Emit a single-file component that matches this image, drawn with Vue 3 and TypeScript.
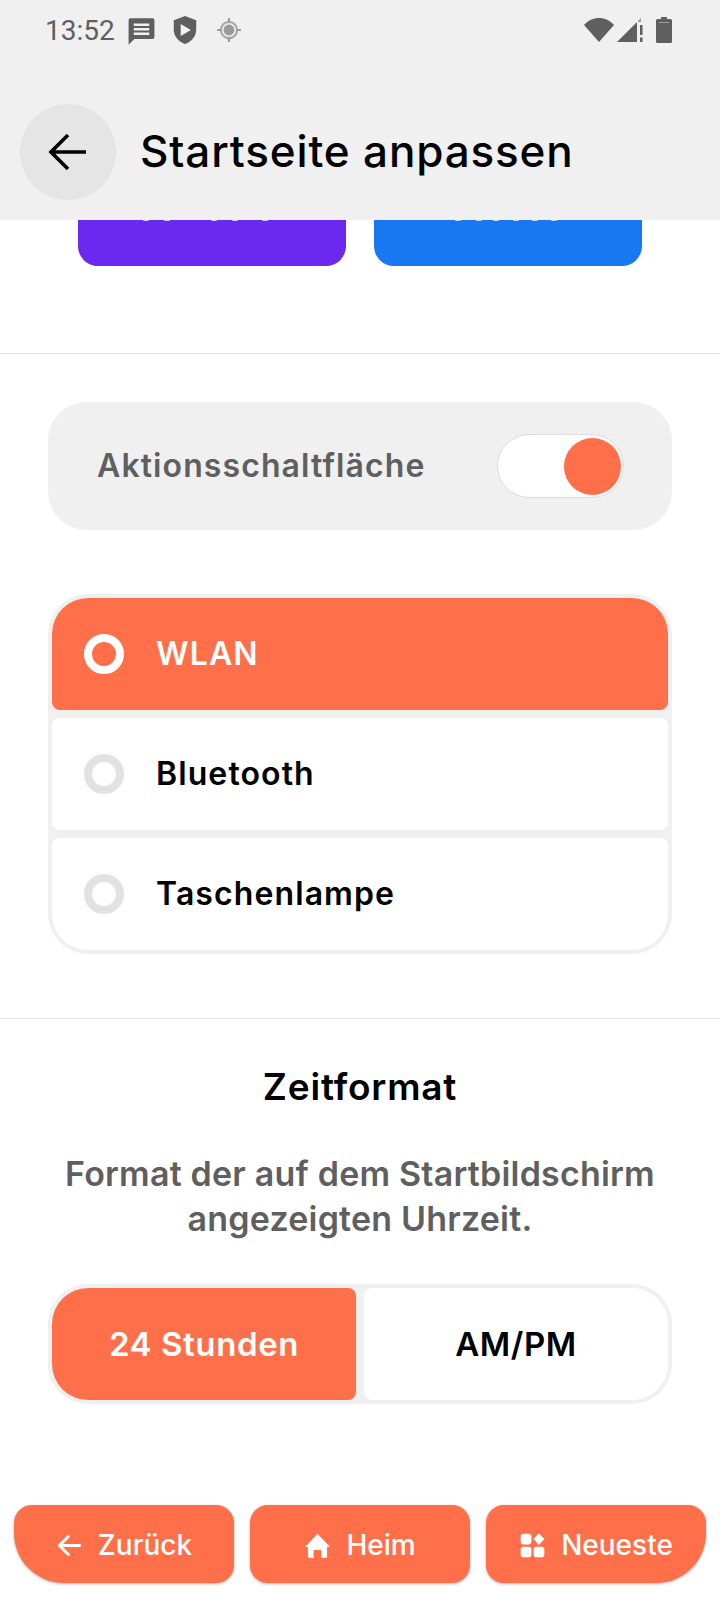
<script setup lang="ts">
const radios = [
  { label: 'WLAN', on: true },
  { label: 'Bluetooth', on: false },
  { label: 'Taschenlampe', on: false },
]
const purpleDots = [65, 86, 133, 154, 184]
const blueDots = [81, 102, 119, 139, 158, 177]
</script>

<template>
  <div class="page">
    <header class="head">
      <div class="status">
        <span class="time">13:52</span>
        <svg class="si" viewBox="0 0 24 24" width="31" height="31"><path fill="#5f5f5f" d="M3.5 2.5h17a1.5 1.5 0 0 1 1.5 1.5v13a1.500 1.500 0 0 1-1.500 1.500H6.500L2 23V4a1.500 1.500 0 0 1 1.500-1.500z"/><path fill="#f0f0f0" d="M6 6.500h12v2H6zM6 10h12v2H6zM6 13.500h12v2H6z"/></svg>
        <svg class="si gap" viewBox="0 0 24 28" width="26" height="30"><path fill="#5f5f5f" d="M12 1l10.500 4v8.500c0 6.500-4.500 11.500-10.500 13.500C6 25 1.500 20 1.500 13.500V5z"/><path fill="#f0f0f0" d="M8 8.500l9.500 5.500L8 19.500z"/></svg>
        <svg class="si loc" viewBox="0 0 24 24" width="26" height="26"><circle cx="12" cy="12" r="5" fill="#9a9a9a"/><circle cx="12" cy="12" r="7.500" fill="none" stroke="#a8a8a8" stroke-width="2"/><path stroke="#9a9a9a" stroke-width="2" d="M12 1v4M12 19v4M1 12h4M19 12h4"/></svg>
        <span class="spacer"></span>
        <svg viewBox="0 0 30 26" width="30" height="26"><path fill="#5f5f5f" d="M0 8C8-1.500 22-1.500 30 8L15 25z"/></svg>
        <svg class="sig" viewBox="0 0 26 26" width="26" height="26"><path fill="#5f5f5f" d="M0 25L20 5v20z"/><path fill="#9a9a9a" d="M21 4l3-3v4h-3z"/><path fill="#5f5f5f" d="M23 8h2.500v10H23zM23 20.500h2.500V25H23z"/></svg>
        <svg class="bat" viewBox="0 0 16 26" width="16" height="26"><path fill="#5f5f5f" d="M5 0h6v2h3.500A1.500 1.500 0 0 1 16 3.500v21a1.500 1.500 0 0 1-1.500 1.500h-13A1.500 1.500 0 0 1 0 24.500v-21A1.500 1.500 0 0 1 1.500 2H5z"/><path fill="#9a9a9a" d="M3 5h10v1H3z"/></svg>
      </div>
      <div class="bar">
        <button class="back" aria-label="Zurück">
          <svg viewBox="0 0 40 40" width="40" height="40"><path fill="none" stroke="#000" stroke-width="3.600" d="M38 20H4M20 3L3 20l17 17"/></svg>
        </button>
        <h1>Startseite anpassen</h1>
      </div>
    </header>

    <main class="scroll">
      <div class="inner">
        <div class="tiles">
          <div class="tile purple"><i v-for="d in purpleDots" :key="d" :style="{ left: d + 'px' }"></i></div>
          <div class="tile blue"><i v-for="d in blueDots" :key="d" :style="{ left: d + 'px' }"></i></div>
        </div>
        <hr class="rule first" />
        <div class="switchcard">
          <span>Aktionsschaltfläche</span>
          <div class="switch"><i></i></div>
        </div>
        <div class="radios">
          <div v-for="r in radios" :key="r.label" class="radio" :class="{ on: r.on }">
            <span class="dot"></span>
            <span class="rl">{{ r.label }}</span>
          </div>
        </div>
        <hr class="rule second" />
        <h2>Zeitformat</h2>
        <p>Format der auf dem Startbildschirm angezeigten Uhrzeit.</p>
        <div class="seg">
          <div class="opt on">24 Stunden</div>
          <div class="opt">AM/PM</div>
        </div>
      </div>
    </main>

    <nav class="nav">
      <button class="nb l">
        <svg viewBox="0 0 24 24" width="27" height="27"><path fill="none" stroke="#fff" stroke-width="2.600" stroke-linecap="round" stroke-linejoin="round" d="M21 12H3.500M11 4l-8 8 8 8"/></svg>
        Zurück
      </button>
      <button class="nb">
        <svg viewBox="0 0 24 24" width="27" height="27"><path fill="#fff" d="M12 1.500l11 11.500h-2.500v8.500a1.500 1.500 0 0 1-1.500 1.500h-3.500v-6a1 1 0 0 0-1-1h-5a1 1 0 0 0-1 1v6H5a1.500 1.500 0 0 1-1.500-1.500V13H1z"/></svg>
        Heim
      </button>
      <button class="nb r">
        <svg viewBox="0 0 24 24" width="27" height="27"><rect x="1.500" y="1.500" width="9.500" height="9.500" rx="2.500" fill="#fff"/><rect x="1.500" y="13" width="9.500" height="9.500" rx="2.500" fill="#fff"/><rect x="13" y="13" width="9.500" height="9.500" rx="2.500" fill="#fff"/><path fill="#fff" d="M17.700 1l4.800 5.200-4.800 5.300-4.800-5.300z"/></svg>
        Neueste
      </button>
    </nav>
  </div>
</template>

<style>
html, body { margin: 0; background: #fff; }
</style>

<style scoped>
.page { width: 720px; height: 1600px; display: flex; flex-direction: column; background: #fff; font-family: Inter, sans-serif; overflow: hidden; }
.head { height: 220px; background: #f0f0f0; flex: none; position: relative; z-index: 1; }
.status { height: 60px; display: flex; align-items: center; padding: 0 48px 0 45px; color: #5f5f5f; }
.time { font: 400 28px Roboto, sans-serif; margin-right: 11px; }
.gap { margin-left: 15px; }
.loc { margin-left: 18px; }
.spacer { flex: 1; }
.sig { margin-left: 3px; }
.bat { margin-left: 13px; }
.bar { display: flex; align-items: center; height: 96px; margin-top: 44px; padding-left: 20px; }
.back { width: 96px; height: 96px; border: 0; border-radius: 50%; background: #e5e5e5; display: flex; align-items: center; justify-content: center; padding: 0; }
.bar h1 { margin: -2px 0 0 24px; font-size: 44px; font-weight: 500; color: #000; letter-spacing: .85px; }
.scroll { flex: 1; min-height: 0; overflow: hidden; }
.inner { padding: 0 48px; margin-top: -60px; }
.tiles { display: flex; gap: 28px; padding: 0 30px; }
.tile { flex: 1; height: 105.500px; border-radius: 0 0 20px 20px; position: relative; }
.tile i { position: absolute; top: 60px; width: 6px; height: 1px; border-radius: 0 0 3px 3px; background: rgba(255,255,255,.7); }
.purple { background: #6a28f0; }
.blue { background: #1778f2; }
.rule { border: 0; height: 1px; background: #e6e6e6; margin: 0 -48px; }
.rule.first { margin-top: 87.500px; }
.switchcard { margin-top: 48px; height: 128px; border-radius: 38px; background: #f0f0f0; display: flex; align-items: center; justify-content: space-between; padding: 0 48px 0 49px; color: #5f5f5f; font-size: 32px; font-weight: 600; letter-spacing: 1.100px; }
.switchcard span { margin-top: -2px; }
.switch { width: 127px; height: 64px; border-radius: 32px; background: #fff; border: 1px solid #dcdcdc; box-sizing: border-box; display: flex; justify-content: flex-end; align-items: center; padding-right: 2px; }
.switch i { width: 57px; height: 57px; border-radius: 50%; background: #ff704a; }
.radios { margin-top: 64px; background: #f0f0f0; border-radius: 40px; padding: 4px; display: flex; flex-direction: column; gap: 8px; }
.radio { height: 112px; background: #fff; border-radius: 8px; display: flex; align-items: center; padding-left: 32px; gap: 32px; font-size: 32px; font-weight: 600; letter-spacing: 1.100px; color: #000; }
.rl { margin-top: -2px; }
.radio:first-child { border-radius: 36px 36px 8px 8px; }
.radio:last-child { border-radius: 8px 8px 36px 36px; }
.radio.on { background: #ff704a; color: #fff; }
.dot { width: 40px; height: 40px; box-sizing: border-box; border-radius: 50%; border: 8px solid #e2e2e2; }
.on .dot { border-color: #fff; }
.rule.second { margin-top: 64px; }
h2 { margin: 45px 0 0; text-align: center; font-size: 37px; font-weight: 600; letter-spacing: .8px; color: #000; }
p { margin: 41.500px 0 0; text-align: center; font-size: 34px; line-height: 45px; font-weight: 600; letter-spacing: .2px; color: #5f5f5f; }
.seg { margin-top: 43px; height: 120px; background: #f0f0f0; border-radius: 40px; padding: 4px; box-sizing: border-box; display: flex; gap: 8px; }
.opt { flex: 1; background: #fff; border-radius: 8px 36px 36px 8px; display: flex; align-items: center; justify-content: center; font-size: 33px; font-weight: 600; letter-spacing: .6px; color: #000; }
.opt.on { background: #ff704a; color: #fff; border-radius: 36px 8px 8px 36px; }
.nav { flex: none; height: 95px; box-sizing: border-box; padding: 0 14px 17px; display: flex; gap: 16px; }
.nb { flex: 1; border: 0; background: #ff704a; color: #fff; border-radius: 18px; font: 500 28px Inter, sans-serif; display: flex; align-items: center; justify-content: center; gap: 15px; padding: 2px 0 0; box-shadow: 0 1px 3px rgba(0,0,0,.3); }
.nb.l { border-radius: 18px 18px 18px 50px; }
.nb.r { border-radius: 18px 18px 50px 18px; }
</style>
